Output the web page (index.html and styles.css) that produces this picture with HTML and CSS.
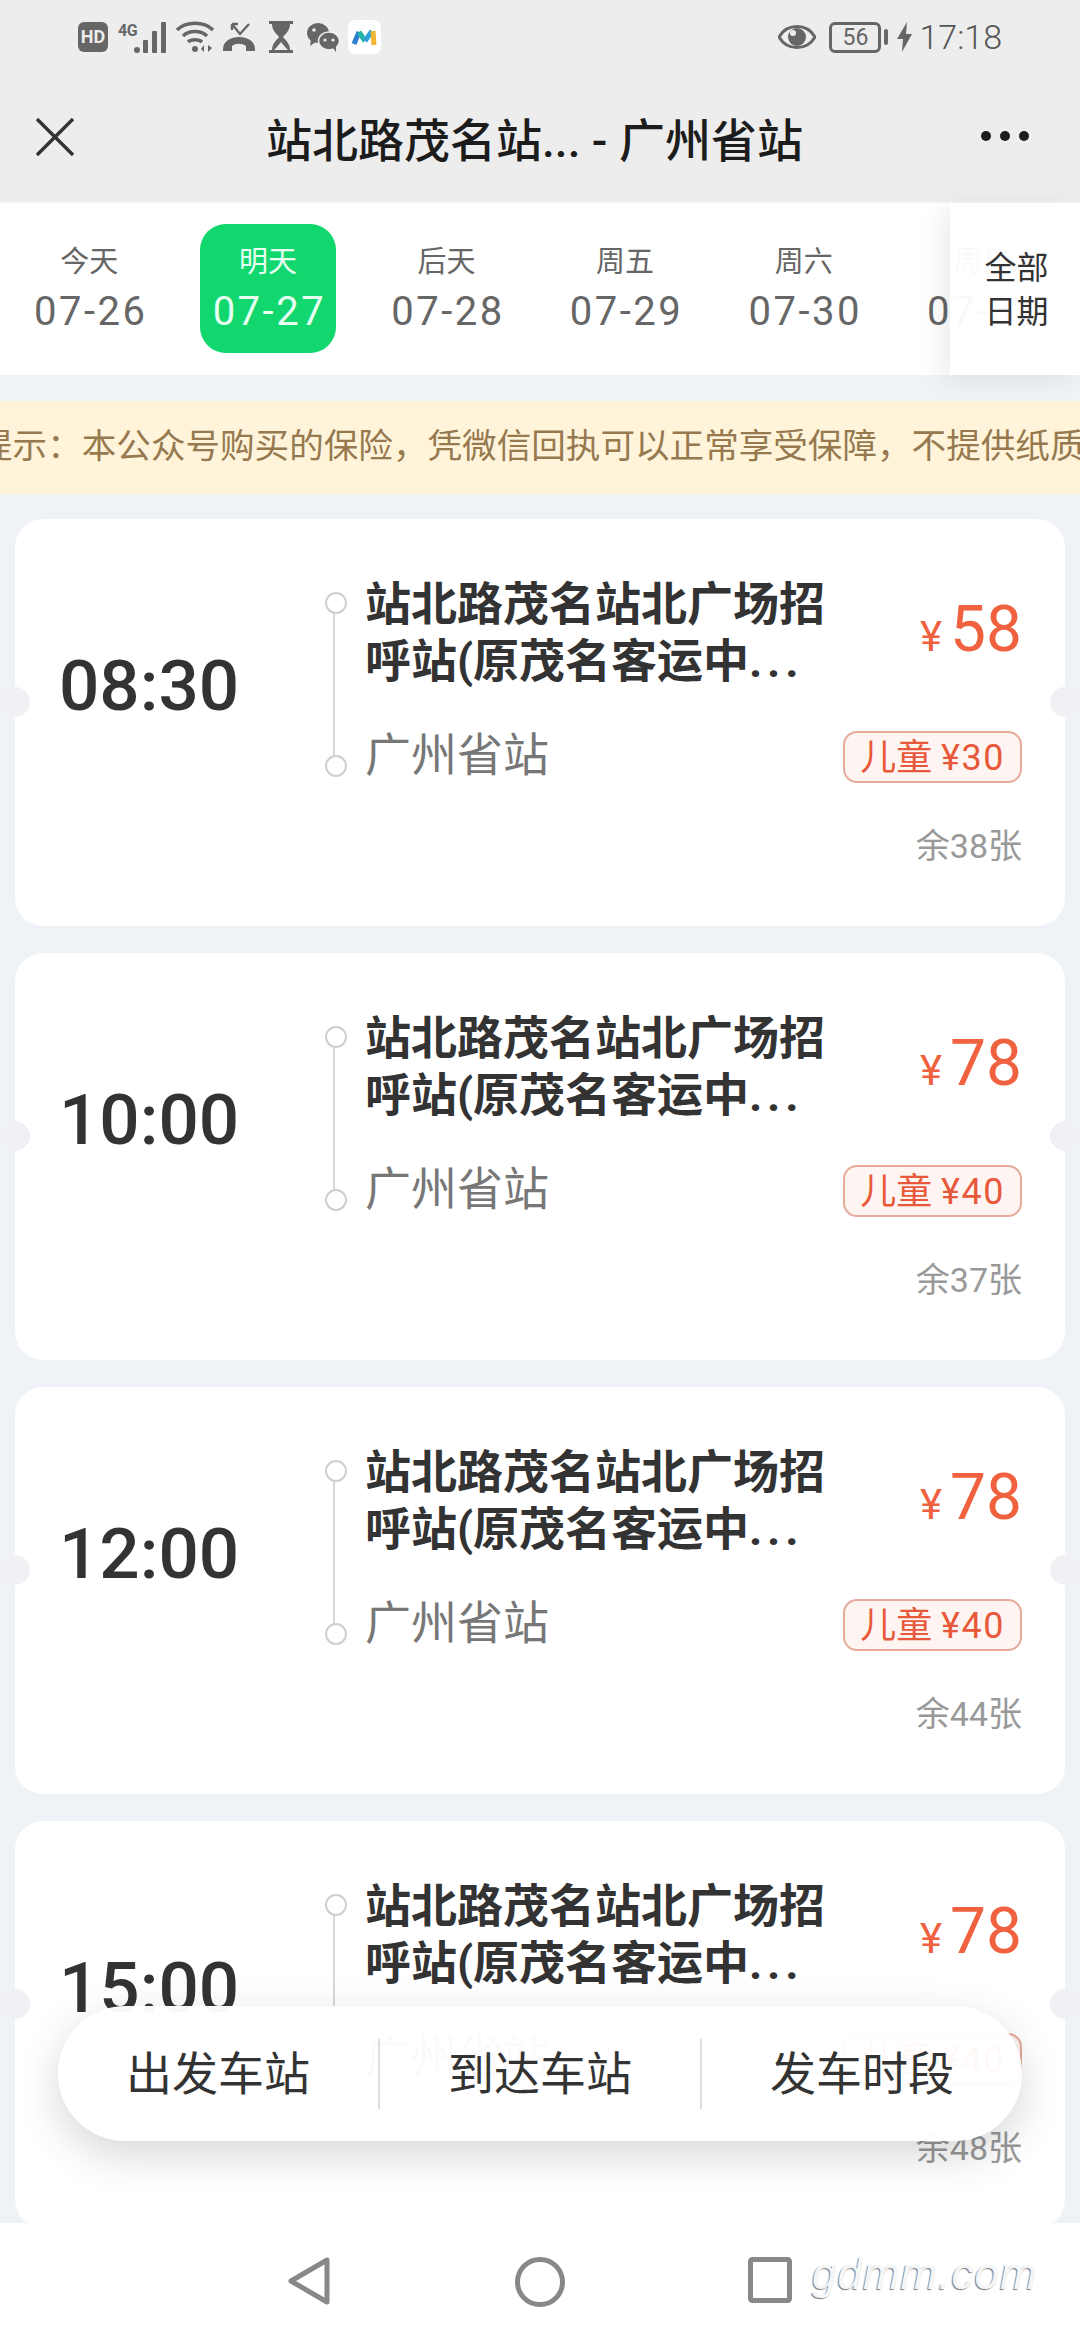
FILE: index.html
```html
<!DOCTYPE html>
<html lang="zh-CN">
<head>
  <meta charset="UTF-8">
  <meta name="viewport" content="width=device-width, initial-scale=1.0">
  <title>站北路茂名站 - 广州省站</title>
  <link rel="stylesheet" href="styles.css">
</head>
<body>
  <header class="top">
    <div class="status">
      <div class="status-left">
        <span class="hd">HD</span>
        <span class="net">4G</span>
        <svg class="signal" width="33" height="32" viewBox="0 0 33 32" fill="#666">
          <circle cx="3" cy="29" r="3"/>
          <rect x="9" y="19" width="5" height="13" rx="1"/>
          <rect x="18" y="10" width="5" height="22" rx="1"/>
          <rect x="27" y="1" width="5" height="31" rx="1"/>
        </svg>
        <svg class="wifi" width="38" height="32" viewBox="0 0 38 32" fill="none" stroke="#666" stroke-width="3.4">
          <path d="M1 9 C10 0 28 0 37 9"/>
          <path d="M7 15 C13 9 25 9 31 15"/>
          <path d="M12 21 C15 18 23 18 26 21"/>
          <circle cx="19" cy="28" r="3" fill="#666" stroke="none"/>
          <path d="M28 31 L28 24 L25 28 Z M32 24 L32 31 L36 27 Z" fill="#666" stroke="none"/>
        </svg>
        <svg class="missed" width="34" height="32" viewBox="0 0 34 32" fill="none" stroke="#666">
          <path d="M10 3 L18 13 L27 3 M10 3 L10 9 M10 3 L16 3" stroke-width="2.4"/>
          <path d="M1 28 C1 12 33 12 33 28 L33 30 L24 30 L24 25 C20 22 14 22 10 25 L10 30 L1 30 Z" fill="#666" stroke="none"/>
        </svg>
        <svg class="glass" width="24" height="32" viewBox="0 0 24 32" fill="#666">
          <rect x="0" y="0" width="24" height="3"/>
          <rect x="0" y="29" width="24" height="3"/>
          <path d="M3 3 L21 3 C21 10 16 13 14 16 C16 19 21 22 21 29 L19 29 L12 22 L5 29 L3 29 C3 22 8 19 10 16 C8 13 3 10 3 3 Z"/>
          <path d="M8 26 L12 21 L16 26 Z" fill="#ededed"/>
        </svg>
        <svg class="wechat" width="32" height="30" viewBox="0 0 32 30" fill="#666">
          <ellipse cx="11" cy="11" rx="11" ry="10"/>
          <path d="M4 17 L3 24 L10 19 Z"/>
          <ellipse cx="22" cy="19" rx="10.5" ry="9" stroke="#ededed" stroke-width="1.5"/>
          <path d="M26 26 L29 30 L29 23 Z"/>
          <circle cx="7" cy="8" r="1.8" fill="#ededed"/>
          <circle cx="18" cy="18" r="1.6" fill="#ededed"/>
          <circle cx="26" cy="18" r="1.6" fill="#ededed"/>
        </svg>
        <span class="app-icon">
          <svg width="28" height="20" viewBox="0 0 28 20" fill="none" stroke-width="5">
            <path d="M3 17 L8 5" stroke="#2f7fd0"/>
            <path d="M8 5 L14 14" stroke="#1fb6a6"/>
            <path d="M14 14 L21 4" stroke="#2f9fd8"/>
            <path d="M22 4 L23 18" stroke="#f2b632"/>
          </svg>
        </span>
      </div>
      <div class="status-right">
        <svg class="eye" width="38" height="26" viewBox="0 0 38 26">
          <path d="M1 13 C9 -1 29 -1 37 13 C29 27 9 27 1 13 Z" fill="none" stroke="#666" stroke-width="3"/>
          <circle cx="19" cy="13" r="9" fill="#666"/>
          <circle cx="15" cy="9" r="3" fill="#ededed"/>
        </svg>
        <span class="battery">56</span>
        <span class="battery-nub"></span>
        <svg class="bolt" width="15" height="30" viewBox="0 0 15 30" fill="#666">
          <path d="M10 0 L0 17 L6 17 L5 30 L15 12 L9 12 Z"/>
        </svg>
        <span class="clock">17:18</span>
      </div>
    </div>
    <div class="titlebar">
      <svg class="close" width="38" height="38" viewBox="0 0 38 38" stroke="#333" stroke-width="3.4">
        <path d="M1 1 L37 37 M37 1 L1 37"/>
      </svg>
      <h1 class="page-title">站北路茂名站... - 广州省站</h1>
      <div class="more"><i></i><i></i><i></i></div>
    </div>
  </header>

  <section class="dates">
    <div class="date"><span>今天</span><b>07-26</b></div>
    <div class="date active"><span>明天</span><b>07-27</b></div>
    <div class="date"><span>后天</span><b>07-28</b></div>
    <div class="date"><span>周五</span><b>07-29</b></div>
    <div class="date"><span>周六</span><b>07-30</b></div>
    <div class="date"><span>周日</span><b>07-31</b></div>
    <div class="all-dates">全部<br>日期</div>
  </section>

  <div class="notice"><p>提示&#xFF1A;本公众号购买的保险&#xFF0C;凭微信回执可以正常享受保障&#xFF0C;不提供纸质保单</p></div>

  <main class="list-wrap">
    <div class="list">
      <article class="card">
        <div class="time">08:30</div>
        <div class="route">
          <div class="from">站北路茂名站北广场招呼站(原茂名客运中.&#x200A;.&#x200A;.</div>
          <div class="to">广州省站</div>
        </div>
        <div class="fare">
          <div class="price"><small>¥</small>58</div>
          <div class="child">儿童 <span>¥30</span></div>
          <div class="left">余38张</div>
        </div>
      </article>
      <article class="card">
        <div class="time">10:00</div>
        <div class="route">
          <div class="from">站北路茂名站北广场招呼站(原茂名客运中.&#x200A;.&#x200A;.</div>
          <div class="to">广州省站</div>
        </div>
        <div class="fare">
          <div class="price"><small>¥</small>78</div>
          <div class="child">儿童 <span>¥40</span></div>
          <div class="left">余37张</div>
        </div>
      </article>
      <article class="card">
        <div class="time">12:00</div>
        <div class="route">
          <div class="from">站北路茂名站北广场招呼站(原茂名客运中.&#x200A;.&#x200A;.</div>
          <div class="to">广州省站</div>
        </div>
        <div class="fare">
          <div class="price"><small>¥</small>78</div>
          <div class="child">儿童 <span>¥40</span></div>
          <div class="left">余44张</div>
        </div>
      </article>
      <article class="card">
        <div class="time">15:00</div>
        <div class="route">
          <div class="from">站北路茂名站北广场招呼站(原茂名客运中.&#x200A;.&#x200A;.</div>
          <div class="to">广州省站</div>
        </div>
        <div class="fare">
          <div class="price"><small>¥</small>78</div>
          <div class="child">儿童 <span>¥40</span></div>
          <div class="left">余48张</div>
        </div>
      </article>
    </div>

    <div class="filters">
      <div class="filter">出发车站</div>
      <div class="filter">到达车站</div>
      <div class="filter">发车时段</div>
    </div>
  </main>

  <footer class="sysnav">
    <svg width="42" height="48" viewBox="0 0 42 48" fill="none" stroke="#888" stroke-width="5" stroke-linejoin="round">
      <path d="M39 3 L39 45 L3 24 Z"/>
    </svg>
    <svg width="50" height="50" viewBox="0 0 50 50" fill="none" stroke="#888" stroke-width="5">
      <circle cx="25" cy="25" r="22.5"/>
    </svg>
    <svg class="recent" width="44" height="46" viewBox="0 0 44 46" fill="none" stroke="#888" stroke-width="5" stroke-linejoin="round">
      <rect x="2.5" y="2.5" width="39" height="41" rx="2"/>
    </svg>
    <span class="watermark">gdmm.com</span>
  </footer>
</body>
</html>
```

FILE: styles.css
```css
* {
  box-sizing: border-box;
}

body {
  margin: 0;
  width: 1080px;
  height: 2340px;
  overflow: hidden;
  display: flex;
  flex-direction: column;
  background-color: #eff2f6;
  font-family: Roboto, "Noto Sans CJK SC", sans-serif;
  color: #333;
}

/* status bar + title */
.top {
  height: 201px;
  background-color: #ededed;
  flex: none;
}

.status {
  height: 76px;
  padding: 0 78px 2px 78px;
  display: flex;
  align-items: center;
  justify-content: space-between;
}

.status-left,
.status-right {
  display: flex;
  align-items: center;
}

.hd {
  width: 30px;
  height: 30px;
  border-radius: 6px;
  background-color: #666;
  color: #ededed;
  font-size: 18px;
  font-weight: 700;
  line-height: 30px;
  text-align: center;
}

.net {
  margin-left: 10px;
  align-self: flex-start;
  font-size: 16px;
  font-weight: 700;
  line-height: 22px;
  letter-spacing: -0.5px;
  color: #666;
}

.signal {
  margin-left: -3px;
}

.wifi {
  margin-left: 9px;
}

.missed {
  margin-left: 8px;
}

.glass {
  margin-left: 13px;
}

.wechat {
  margin-left: 14px;
}

.app-icon {
  margin-left: 9px;
  width: 33px;
  height: 34px;
  border-radius: 7px;
  background-color: #fff;
  display: flex;
  align-items: center;
  justify-content: center;
}

.battery {
  margin-left: 13px;
  width: 52px;
  height: 31px;
  border: 3px solid #666;
  border-radius: 6px;
  font-size: 23px;
  line-height: 25px;
  text-align: center;
  color: #666;
}

.battery-nub {
  margin-left: 3px;
  width: 4px;
  height: 16px;
  border-radius: 2px;
  background-color: #666;
}

.bolt {
  margin-left: 9px;
}

.clock {
  margin-left: 7px;
  font-size: 34px;
  font-weight: 300;
  color: #555;
}

.titlebar {
  height: 125px;
  padding: 0 51px 0 36px;
  display: flex;
  align-items: center;
}

.close {
  flex: none;
  margin-top: -4px;
}

.page-title {
  flex: 1;
  margin: -4px 0 0 0;
  padding-left: 14px;
  text-align: center;
  font-size: 46px;
  font-weight: 500;
  color: #1c1c1c;
  white-space: nowrap;
}

.more {
  display: flex;
  gap: 9px;
  margin-top: -5px;
}

.more i {
  width: 10px;
  height: 10px;
  border-radius: 50%;
  background-color: #1c1c1c;
}

/* date strip */
.dates {
  position: relative;
  flex: none;
  margin-top: 2px;
  height: 172px;
  padding-top: 21px;
  background-color: #fff;
  display: flex;
  overflow: visible;
}

.date {
  flex: none;
  width: 178.6px;
  height: 129px;
  padding-top: 16px;
  display: flex;
  flex-direction: column;
  align-items: center;
  color: #666;
}

.date span {
  font-size: 29px;
  line-height: 44px;
}

.date b {
  padding-left: 3px;
  font-size: 40px;
  font-weight: 400;
  line-height: 56px;
  letter-spacing: 2.5px;
}

.date.active {
  position: relative;
  color: #e6fff2;
}

.date.active::before {
  content: "";
  position: absolute;
  z-index: 0;
  top: 0;
  left: 21px;
  width: 136px;
  height: 129px;
  border-radius: 26px;
  background-color: #12d76e;
}

.date.active span,
.date.active b {
  position: relative;
}

.all-dates {
  position: absolute;
  top: 0;
  right: 0;
  bottom: 0;
  width: 130px;
  padding: 43px 0 0 3px;
  background-color: rgba(255, 255, 255, 0.96);
  box-shadow: -10px 6px 24px rgba(0, 0, 0, 0.07);
  font-size: 32px;
  line-height: 44px;
  text-align: center;
  color: #333;
}

/* notice */
.notice {
  flex: none;
  margin-top: 26px;
  height: 93px;
  background-color: #fff4da;
  overflow: hidden;
}

.notice p {
  margin: 0 0 0 -22px;
  font-size: 34.6px;
  line-height: 91px;
  color: #96794f;
  white-space: nowrap;
}

/* ticket cards */
.list-wrap {
  position: relative;
  flex: 1;
  min-height: 0;
  overflow: hidden;
}

.list {
  padding: 25px 15px 0;
  display: flex;
  flex-direction: column;
  gap: 27px;
}

.card {
  position: relative;
  flex: none;
  height: 407px;
  padding: 57px 43px 0 44px;
  border-radius: 28px;
  background-color: #fff;
  display: flex;
  align-items: flex-start;
}

.card::before,
.card::after {
  content: "";
  position: absolute;
  top: 168px;
  width: 30px;
  height: 30px;
  border-radius: 50%;
  background-color: #f0f0f5;
}

.card::before {
  left: -15px;
}

.card::after {
  right: -15px;
}

.time {
  flex: none;
  width: 306px;
  margin-top: 70px;
  font-size: 71px;
  font-weight: 500;
  line-height: 80px;
  color: #333;
}

.route {
  position: relative;
  flex: none;
  width: 460px;
}

/* the line and two stops beside the station names */
.route::before {
  content: "";
  position: absolute;
  left: -32px;
  top: 33px;
  width: 2px;
  height: 160px;
  background-color: #d8d8d8;
}

.from {
  position: relative;
  font-size: 46px;
  font-weight: 700;
  line-height: 57px;
  color: #333;
}

.from::before,
.to::before {
  content: "";
  position: absolute;
  left: -40px;
  width: 18px;
  height: 18px;
  border: 2px solid #cfcfcf;
  border-radius: 50%;
  background-color: #fff;
}

.from::before {
  top: 16px;
}

.to {
  position: relative;
  margin-top: 37px;
  font-size: 46px;
  line-height: 57px;
  color: #777;
}

.to::before {
  top: 28px;
}

.fare {
  flex: 1;
  display: flex;
  flex-direction: column;
  align-items: flex-end;
}

.price {
  margin-top: 19px;
  height: 70px;
  font-size: 64px;
  line-height: 70px;
  color: #f0623f;
  white-space: nowrap;
}

.price small {
  margin-right: 8px;
  font-size: 42px;
  line-height: 1;
}

.child {
  margin-top: 66px;
  height: 52px;
  padding: 0 15px;
  border: 2px solid #e6ab9b;
  border-radius: 14px;
  background-color: #fef5f2;
  font-size: 36px;
  line-height: 50px;
  color: #e8583a;
  white-space: nowrap;
}

.child span {
  letter-spacing: 1.5px;
}

.left {
  margin-top: 41px;
  font-size: 34px;
  line-height: 44px;
  color: #999;
  white-space: nowrap;
}

/* floating filter pill */
.filters {
  position: absolute;
  left: 58px;
  bottom: 82px;
  width: 964px;
  height: 135px;
  border-radius: 68px;
  background-color: rgba(255, 255, 255, 0.96);
  box-shadow: 0 14px 44px rgba(0, 0, 0, 0.16);
  display: flex;
  align-items: center;
}

.filter {
  flex: 1;
  height: 70px;
  font-size: 46px;
  line-height: 70px;
  text-align: center;
  color: #333;
}

.filter + .filter {
  border-left: 2px solid #ddd;
}

/* system navigation */
.sysnav {
  position: relative;
  flex: none;
  height: 117px;
  padding: 34px 0 0 288px;
  background-color: #fff;
  display: flex;
  align-items: flex-start;
  gap: 185px;
}

.recent {
  margin-left: -2px;
}

.watermark {
  position: absolute;
  left: 812px;
  top: 26px;
  font-family: "Liberation Sans", sans-serif;
  font-size: 44px;
  font-style: italic;
  letter-spacing: 1px;
  color: #f6f6f6;
  text-shadow: -1px 1px 1px #7a7a7a;
}
```
